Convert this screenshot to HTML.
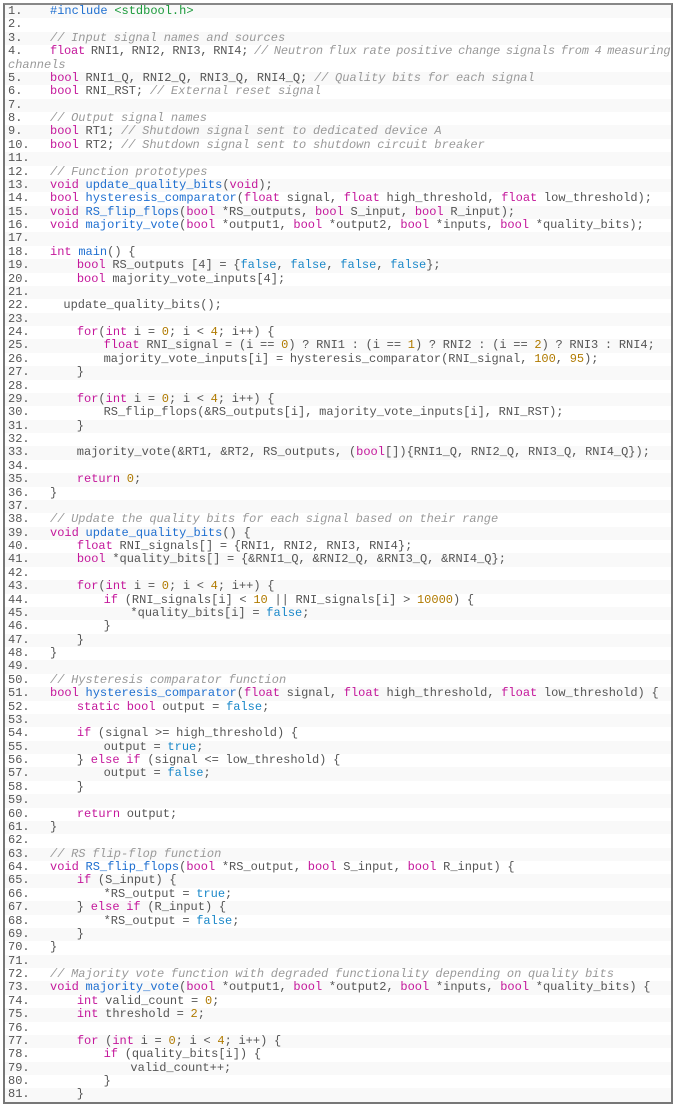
<!DOCTYPE html>
<html><head><meta charset="utf-8"><style>
html,body{margin:0;padding:0;background:#fff;width:674px;height:1105px;overflow:hidden}
#box{position:absolute;left:3px;top:3px;width:666px;height:1097px;border:2px solid #777;border-top-color:#888;background:#fff;overflow:hidden}
.l{position:relative;height:13.38px;line-height:13.38px;font-family:"Liberation Mono",monospace;font-size:12px;color:#555;white-space:pre;word-spacing:-0.5px}
.l:nth-child(odd){background:#f9f9f9}
.n{position:absolute;left:3px;color:#555}
.c{position:absolute;left:45px}
.k{color:#c4179b}.f{color:#1f6fd0}.b{color:#1a88c9}.d{color:#b07a00}.m{color:#999;font-style:italic}.g{color:#1a9a3a}.p{color:#1f6fd0}
.w{height:26.76px}
.t{letter-spacing:-0.2px;word-spacing:-1.2px}
</style></head><body><div id="box">
<div class="l"><span class="n">1.</span><span class="c"><span class="p">#include</span> <span class="g">&lt;stdbool.h&gt;</span></span></div>
<div class="l"><span class="n">2.</span></div>
<div class="l"><span class="n">3.</span><span class="c"><span class="m">// Input signal names and sources</span></span></div>
<div class="l w"><span class="n">4.</span><span class="c t"><span class="k">float</span> RNI1, RNI2, RNI3, RNI4; <span class="m">// Neutron flux rate positive change signals from 4 measuring</span></span><span class="n m" style="top:13.38px">channels</span></div>
<div class="l"><span class="n">5.</span><span class="c"><span class="k">bool</span> RNI1_Q, RNI2_Q, RNI3_Q, RNI4_Q; <span class="m">// Quality bits for each signal</span></span></div>
<div class="l"><span class="n">6.</span><span class="c"><span class="k">bool</span> RNI_RST; <span class="m">// External reset signal</span></span></div>
<div class="l"><span class="n">7.</span></div>
<div class="l"><span class="n">8.</span><span class="c"><span class="m">// Output signal names</span></span></div>
<div class="l"><span class="n">9.</span><span class="c"><span class="k">bool</span> RT1; <span class="m">// Shutdown signal sent to dedicated device A</span></span></div>
<div class="l"><span class="n">10.</span><span class="c"><span class="k">bool</span> RT2; <span class="m">// Shutdown signal sent to shutdown circuit breaker</span></span></div>
<div class="l"><span class="n">11.</span></div>
<div class="l"><span class="n">12.</span><span class="c"><span class="m">// Function prototypes</span></span></div>
<div class="l"><span class="n">13.</span><span class="c"><span class="k">void</span> <span class="f">update_quality_bits</span>(<span class="k">void</span>);</span></div>
<div class="l"><span class="n">14.</span><span class="c"><span class="k">bool</span> <span class="f">hysteresis_comparator</span>(<span class="k">float</span> signal, <span class="k">float</span> high_threshold, <span class="k">float</span> low_threshold);</span></div>
<div class="l"><span class="n">15.</span><span class="c"><span class="k">void</span> <span class="f">RS_flip_flops</span>(<span class="k">bool</span> *RS_outputs, <span class="k">bool</span> S_input, <span class="k">bool</span> R_input);</span></div>
<div class="l"><span class="n">16.</span><span class="c"><span class="k">void</span> <span class="f">majority_vote</span>(<span class="k">bool</span> *output1, <span class="k">bool</span> *output2, <span class="k">bool</span> *inputs, <span class="k">bool</span> *quality_bits);</span></div>
<div class="l"><span class="n">17.</span></div>
<div class="l"><span class="n">18.</span><span class="c"><span class="k">int</span> <span class="f">main</span>() {</span></div>
<div class="l"><span class="n">19.</span><span class="c">    <span class="k">bool</span> RS_outputs [4] = {<span class="b">false</span>, <span class="b">false</span>, <span class="b">false</span>, <span class="b">false</span>};</span></div>
<div class="l"><span class="n">20.</span><span class="c">    <span class="k">bool</span> majority_vote_inputs[4];</span></div>
<div class="l"><span class="n">21.</span></div>
<div class="l"><span class="n">22.</span><span class="c">  update_quality_bits();</span></div>
<div class="l"><span class="n">23.</span></div>
<div class="l"><span class="n">24.</span><span class="c">    <span class="k">for</span>(<span class="k">int</span> i = <span class="d">0</span>; i &lt; <span class="d">4</span>; i++) {</span></div>
<div class="l"><span class="n">25.</span><span class="c">        <span class="k">float</span> RNI_signal = (i == <span class="d">0</span>) ? RNI1 : (i == <span class="d">1</span>) ? RNI2 : (i == <span class="d">2</span>) ? RNI3 : RNI4;</span></div>
<div class="l"><span class="n">26.</span><span class="c">        majority_vote_inputs[i] = hysteresis_comparator(RNI_signal, <span class="d">100</span>, <span class="d">95</span>);</span></div>
<div class="l"><span class="n">27.</span><span class="c">    }</span></div>
<div class="l"><span class="n">28.</span></div>
<div class="l"><span class="n">29.</span><span class="c">    <span class="k">for</span>(<span class="k">int</span> i = <span class="d">0</span>; i &lt; <span class="d">4</span>; i++) {</span></div>
<div class="l"><span class="n">30.</span><span class="c">        RS_flip_flops(&amp;RS_outputs[i], majority_vote_inputs[i], RNI_RST);</span></div>
<div class="l"><span class="n">31.</span><span class="c">    }</span></div>
<div class="l"><span class="n">32.</span></div>
<div class="l"><span class="n">33.</span><span class="c">    majority_vote(&amp;RT1, &amp;RT2, RS_outputs, (<span class="k">bool</span>[]){RNI1_Q, RNI2_Q, RNI3_Q, RNI4_Q});</span></div>
<div class="l"><span class="n">34.</span></div>
<div class="l"><span class="n">35.</span><span class="c">    <span class="k">return</span> <span class="d">0</span>;</span></div>
<div class="l"><span class="n">36.</span><span class="c">}</span></div>
<div class="l"><span class="n">37.</span></div>
<div class="l"><span class="n">38.</span><span class="c"><span class="m">// Update the quality bits for each signal based on their range</span></span></div>
<div class="l"><span class="n">39.</span><span class="c"><span class="k">void</span> <span class="f">update_quality_bits</span>() {</span></div>
<div class="l"><span class="n">40.</span><span class="c">    <span class="k">float</span> RNI_signals[] = {RNI1, RNI2, RNI3, RNI4};</span></div>
<div class="l"><span class="n">41.</span><span class="c">    <span class="k">bool</span> *quality_bits[] = {&amp;RNI1_Q, &amp;RNI2_Q, &amp;RNI3_Q, &amp;RNI4_Q};</span></div>
<div class="l"><span class="n">42.</span></div>
<div class="l"><span class="n">43.</span><span class="c">    <span class="k">for</span>(<span class="k">int</span> i = <span class="d">0</span>; i &lt; <span class="d">4</span>; i++) {</span></div>
<div class="l"><span class="n">44.</span><span class="c">        <span class="k">if</span> (RNI_signals[i] &lt; <span class="d">10</span> || RNI_signals[i] &gt; <span class="d">10000</span>) {</span></div>
<div class="l"><span class="n">45.</span><span class="c">            *quality_bits[i] = <span class="b">false</span>;</span></div>
<div class="l"><span class="n">46.</span><span class="c">        }</span></div>
<div class="l"><span class="n">47.</span><span class="c">    }</span></div>
<div class="l"><span class="n">48.</span><span class="c">}</span></div>
<div class="l"><span class="n">49.</span></div>
<div class="l"><span class="n">50.</span><span class="c"><span class="m">// Hysteresis comparator function</span></span></div>
<div class="l"><span class="n">51.</span><span class="c"><span class="k">bool</span> <span class="f">hysteresis_comparator</span>(<span class="k">float</span> signal, <span class="k">float</span> high_threshold, <span class="k">float</span> low_threshold) {</span></div>
<div class="l"><span class="n">52.</span><span class="c">    <span class="k">static</span> <span class="k">bool</span> output = <span class="b">false</span>;</span></div>
<div class="l"><span class="n">53.</span></div>
<div class="l"><span class="n">54.</span><span class="c">    <span class="k">if</span> (signal &gt;= high_threshold) {</span></div>
<div class="l"><span class="n">55.</span><span class="c">        output = <span class="b">true</span>;</span></div>
<div class="l"><span class="n">56.</span><span class="c">    } <span class="k">else</span> <span class="k">if</span> (signal &lt;= low_threshold) {</span></div>
<div class="l"><span class="n">57.</span><span class="c">        output = <span class="b">false</span>;</span></div>
<div class="l"><span class="n">58.</span><span class="c">    }</span></div>
<div class="l"><span class="n">59.</span></div>
<div class="l"><span class="n">60.</span><span class="c">    <span class="k">return</span> output;</span></div>
<div class="l"><span class="n">61.</span><span class="c">}</span></div>
<div class="l"><span class="n">62.</span></div>
<div class="l"><span class="n">63.</span><span class="c"><span class="m">// RS flip-flop function</span></span></div>
<div class="l"><span class="n">64.</span><span class="c"><span class="k">void</span> <span class="f">RS_flip_flops</span>(<span class="k">bool</span> *RS_output, <span class="k">bool</span> S_input, <span class="k">bool</span> R_input) {</span></div>
<div class="l"><span class="n">65.</span><span class="c">    <span class="k">if</span> (S_input) {</span></div>
<div class="l"><span class="n">66.</span><span class="c">        *RS_output = <span class="b">true</span>;</span></div>
<div class="l"><span class="n">67.</span><span class="c">    } <span class="k">else</span> <span class="k">if</span> (R_input) {</span></div>
<div class="l"><span class="n">68.</span><span class="c">        *RS_output = <span class="b">false</span>;</span></div>
<div class="l"><span class="n">69.</span><span class="c">    }</span></div>
<div class="l"><span class="n">70.</span><span class="c">}</span></div>
<div class="l"><span class="n">71.</span></div>
<div class="l"><span class="n">72.</span><span class="c"><span class="m">// Majority vote function with degraded functionality depending on quality bits</span></span></div>
<div class="l"><span class="n">73.</span><span class="c"><span class="k">void</span> <span class="f">majority_vote</span>(<span class="k">bool</span> *output1, <span class="k">bool</span> *output2, <span class="k">bool</span> *inputs, <span class="k">bool</span> *quality_bits) {</span></div>
<div class="l"><span class="n">74.</span><span class="c">    <span class="k">int</span> valid_count = <span class="d">0</span>;</span></div>
<div class="l"><span class="n">75.</span><span class="c">    <span class="k">int</span> threshold = <span class="d">2</span>;</span></div>
<div class="l"><span class="n">76.</span></div>
<div class="l"><span class="n">77.</span><span class="c">    <span class="k">for</span> (<span class="k">int</span> i = <span class="d">0</span>; i &lt; <span class="d">4</span>; i++) {</span></div>
<div class="l"><span class="n">78.</span><span class="c">        <span class="k">if</span> (quality_bits[i]) {</span></div>
<div class="l"><span class="n">79.</span><span class="c">            valid_count++;</span></div>
<div class="l"><span class="n">80.</span><span class="c">        }</span></div>
<div class="l"><span class="n">81.</span><span class="c">    }</span></div>
</div></body></html>
